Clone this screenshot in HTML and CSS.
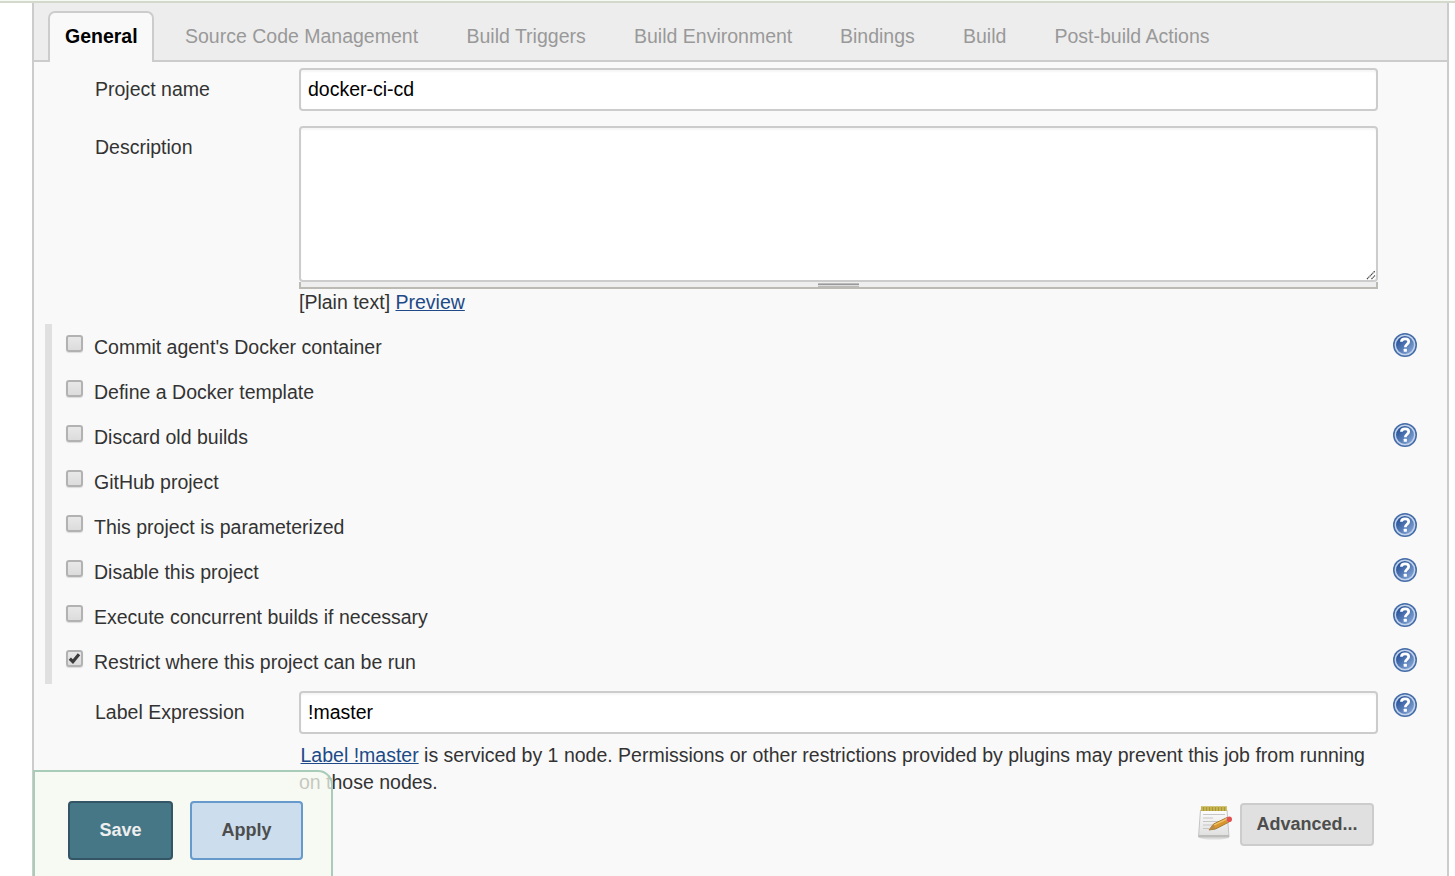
FILE: index.html
```html
<!DOCTYPE html>
<html lang="en">
<head>
<meta charset="utf-8">
<title>docker-ci-cd Config</title>
<link rel="stylesheet" href="styles.css">
</head>
<body>
<svg class="defs" width="0" height="0" aria-hidden="true">
  <defs>
    <linearGradient id="blue" x1="0" y1="0" x2="1" y2="1">
      <stop offset="0.2" stop-color="#2b559a"/><stop offset="0.9" stop-color="#86a8d8"/>
    </linearGradient>
    <linearGradient id="paper" x1="0" y1="0" x2="0" y2="1">
      <stop offset="0" stop-color="#fdfdfd"/><stop offset="1" stop-color="#dedede"/>
    </linearGradient>
    <symbol id="help" viewBox="0 0 24 24">
      <circle cx="12" cy="12" r="12" fill="#446ca8"/>
      <circle cx="12" cy="12" r="9.7" fill="url(#blue)" stroke="#c3d3ea" stroke-width="1.5"/>
      <path d="M8.400 8.700C8.500 6.700 10 5.900 12 5.900c2.200 0 3.700 1 3.700 2.800 0 2.400-3.400 2.600-3.400 5.500" fill="none" stroke="#fff" stroke-width="2.700"/>
      <rect x="10.700" y="15.800" width="3.200" height="3" rx=".5" fill="#fff"/>
    </symbol>
  </defs>
</svg>
<div class="topline"></div>
<main class="panel">
  <nav class="tabs">
    <a class="tab active">General</a>
    <a class="tab t-scm">Source Code Management</a>
    <a class="tab t-trig">Build Triggers</a>
    <a class="tab t-env">Build Environment</a>
    <a class="tab t-bind">Bindings</a>
    <a class="tab t-build">Build</a>
    <a class="tab t-post">Post-build Actions</a>
  </nav>
  <form class="form">
    <div class="row name-row">
      <label class="label">Project name</label>
      <div class="field input">docker-ci-cd</div>
    </div>
    <div class="row desc-row">
      <label class="label">Description</label>
      <div class="field">
        <div class="textarea"><svg class="grip" width="10" height="10" viewBox="0 0 10 10"><path d="M1 9L9 1M5.500 9L9 5.500" stroke="#444" stroke-width="1.200" stroke-dasharray="1.400 .5"/></svg></div>
        <div class="handle"><span class="bar"></span></div>
        <div class="preview">[Plain text] <a class="link">Preview</a></div>
      </div>
    </div>
    <div class="options">
      <div class="option"><span class="check"></span><span class="text">Commit agent's Docker container</span><svg class="help"><use href="#help"/></svg></div>
      <div class="option"><span class="check"></span><span class="text">Define a Docker template</span></div>
      <div class="option"><span class="check"></span><span class="text">Discard old builds</span><svg class="help"><use href="#help"/></svg></div>
      <div class="option"><span class="check"></span><span class="text">GitHub project</span></div>
      <div class="option"><span class="check"></span><span class="text">This project is parameterized</span><svg class="help"><use href="#help"/></svg></div>
      <div class="option"><span class="check"></span><span class="text">Disable this project</span><svg class="help"><use href="#help"/></svg></div>
      <div class="option"><span class="check"></span><span class="text">Execute concurrent builds if necessary</span><svg class="help"><use href="#help"/></svg></div>
      <div class="option"><span class="check"><svg width="13" height="13" viewBox="0 0 13 13"><path d="M1.800 6.600L4.900 9.700L11 2.200" fill="none" stroke="#3c3c3c" stroke-width="3.200"/></svg></span><span class="text">Restrict where this project can be run</span><svg class="help"><use href="#help"/></svg></div>
    </div>
    <div class="row expr-row">
      <label class="label">Label Expression</label>
      <div class="field input">!master</div>
      <svg class="help"><use href="#help"/></svg>
    </div>
    <p class="note"><a class="link">Label !master</a> is serviced by 1 node. Permissions or other restrictions provided by plugins may prevent this job from running<br><span class="second">on those nodes.</span></p>
    <div class="advanced">
      <svg class="notepad" width="36" height="36" viewBox="0 0 36 36">
        <ellipse cx="17" cy="32.500" rx="15" ry="2" fill="#ddd"/>
        <path d="M3.500 5H30L32 32H1.500Z" fill="url(#paper)" stroke="#c4c4c4" stroke-width="1"/>
        <path d="M1.800 30H32V32H1.800Z" fill="#bdbdb9"/>
        <path d="M4 1.500H29.500V6H4Z" fill="#a8973c"/>
        <path d="M5 1V6M8 1V6M11 1V6M14 1V6M17 1V6M20 1V6M23 1V6M26 1V6M29 1V6" stroke="#d3c056" stroke-width="1.400"/>
        <path d="M6 9.500H28M6 13H16M6 16.500H24M6 20H15M6 23.500H12" stroke="#c6c6c6" stroke-width="1.200"/>
        <path d="M12 25L16.500 19L30 12.500L32.500 16.800L18.500 24Z" fill="#d9962e" stroke="#96691f" stroke-width=".8"/>
        <path d="M17 20L30 13.800" stroke="#f2c568" stroke-width="1.300"/>
        <path d="M12 25L16.500 19L18.500 24Z" fill="#b98b48"/>
        <path d="M28.500 13.300L30 12.500L32.500 16.800L31 17.500Z" fill="#ccc"/>
        <ellipse cx="32.300" cy="14.200" rx="2.700" ry="2.800" fill="#e3514f"/>
      </svg>
      <button class="btn adv" type="button">Advanced...</button>
    </div>
  </form>
</main>
<div class="sticker">
  <button class="btn save" type="button">Save</button>
  <button class="btn apply" type="button">Apply</button>
</div>
</body>
</html>
```
FILE: styles.css
```css
* { box-sizing: border-box; }
body {
  margin: 0;
  height: 876px;
  position: relative;
  overflow: hidden;
  background: #fff;
  color: #333;
  font: 19.5px/27px "Liberation Sans", Arial, sans-serif;
}
.defs { position: absolute; }
.topline { height: 3px; background: #f6faf2; border-bottom: 2px solid #d3d9cc; }
.panel {
  height: 873px;
  margin: 0 6px 0 32px;
  border: solid #ccc;
  border-width: 0 2px;
  background: #f9f9f9;
}
.tabs {
  display: flex;
  height: 59px;
  padding: 8px 0 0 14px;
  background: #ededed;
  border-bottom: 2px solid #ccc;
}
.tab { padding-top: 12px; color: #999; white-space: nowrap; }
.tab.active {
  width: 106px;
  height: 51px;
  margin-right: 31px;
  padding: 10px 0 0 15px;
  border: 2px solid #ccc;
  border-bottom: 0;
  border-radius: 7px 7px 0 0;
  background: #f9f9f9;
  color: #000;
  font-weight: bold;
}
.t-scm { width: 281.5px; }
.t-trig { width: 167.5px; }
.t-env { width: 206px; }
.t-bind { width: 123px; }
.t-build { width: 91.5px; }
.form { padding-top: 6px; }
.row { display: flex; padding-left: 61px; }
.label { width: 204px; padding-top: 8px; }
.field { width: 1079px; }
.input, .textarea {
  border: 2px solid #ccc;
  border-radius: 4px;
  background: #fff;
  box-shadow: inset 0 2px 2px rgba(0,0,0,.04);
}
.input { height: 43px; padding: 6px 7px; color: #000; }
.desc-row { margin-top: 15px; }
.textarea { height: 156px; display: flex; justify-content: flex-end; align-items: flex-end; }
.handle {
  height: 7px;
  display: flex;
  justify-content: center;
  background: #eee;
  border: 2px solid #bbbbb4;
  border-top: 0;
}
.bar { width: 41px; height: 5px; background: linear-gradient(#eee 1px, #bbb 1px 2px, #999 2px 3px, #ddd 3px 4px, #bbb 4px); }
.link { color: #204a87; text-decoration: underline; }
.options { margin: 8px 0 0 11px; border-left: 7px solid #e0e0e0; }
.option { display: flex; height: 45px; padding: 10px 30px 0 14px; }
.check {
  width: 17px;
  height: 17px;
  margin: 1px 11px 0 0;
  display: flex;
  align-items: center;
  justify-content: center;
  border: 2px solid #b2b2b2;
  border-radius: 3px;
  background: linear-gradient(#e8e8e8, #dcdcdc);
  box-shadow: 0 1px 1px rgba(0,0,0,.12);
}
.text { flex: 1; }
.help { width: 24px; height: 24px; margin-top: -1px; }
.expr-row { margin-top: 7px; }
.expr-row .help { margin: 2px 0 0 15px; }
.note { margin: 8px 0 0 266.5px; white-space: nowrap; }
.second { margin-left: -1.5px; }
.advanced { display: flex; justify-content: flex-end; margin-top: 7px; padding-right: 73px; }
.notepad { margin: 2px 7px 0 0; }
.btn {
  padding: 0 0 2px;
  border: 2px solid #ccc;
  border-radius: 4px;
  font: bold 18px/22px "Liberation Sans", Arial, sans-serif;
}
.adv { width: 134px; height: 43px; background: #e0e0e0; color: #4d4d4d; }
.sticker {
  position: absolute;
  left: 33px;
  top: 770px;
  width: 300px;
  height: 110px;
  display: flex;
  gap: 17px;
  padding: 29px 0 0 33px;
  border: 2px solid #a8ccb8;
  border-radius: 0 15px 0 0;
  background: rgba(245,249,239,.75);
}
.save { width: 105px; height: 59px; background: #457787; border-color: #335566; color: #eee; }
.apply { width: 113px; height: 59px; background: #ccddee; border-color: #6699cc; color: #4d4d4d; }
```
